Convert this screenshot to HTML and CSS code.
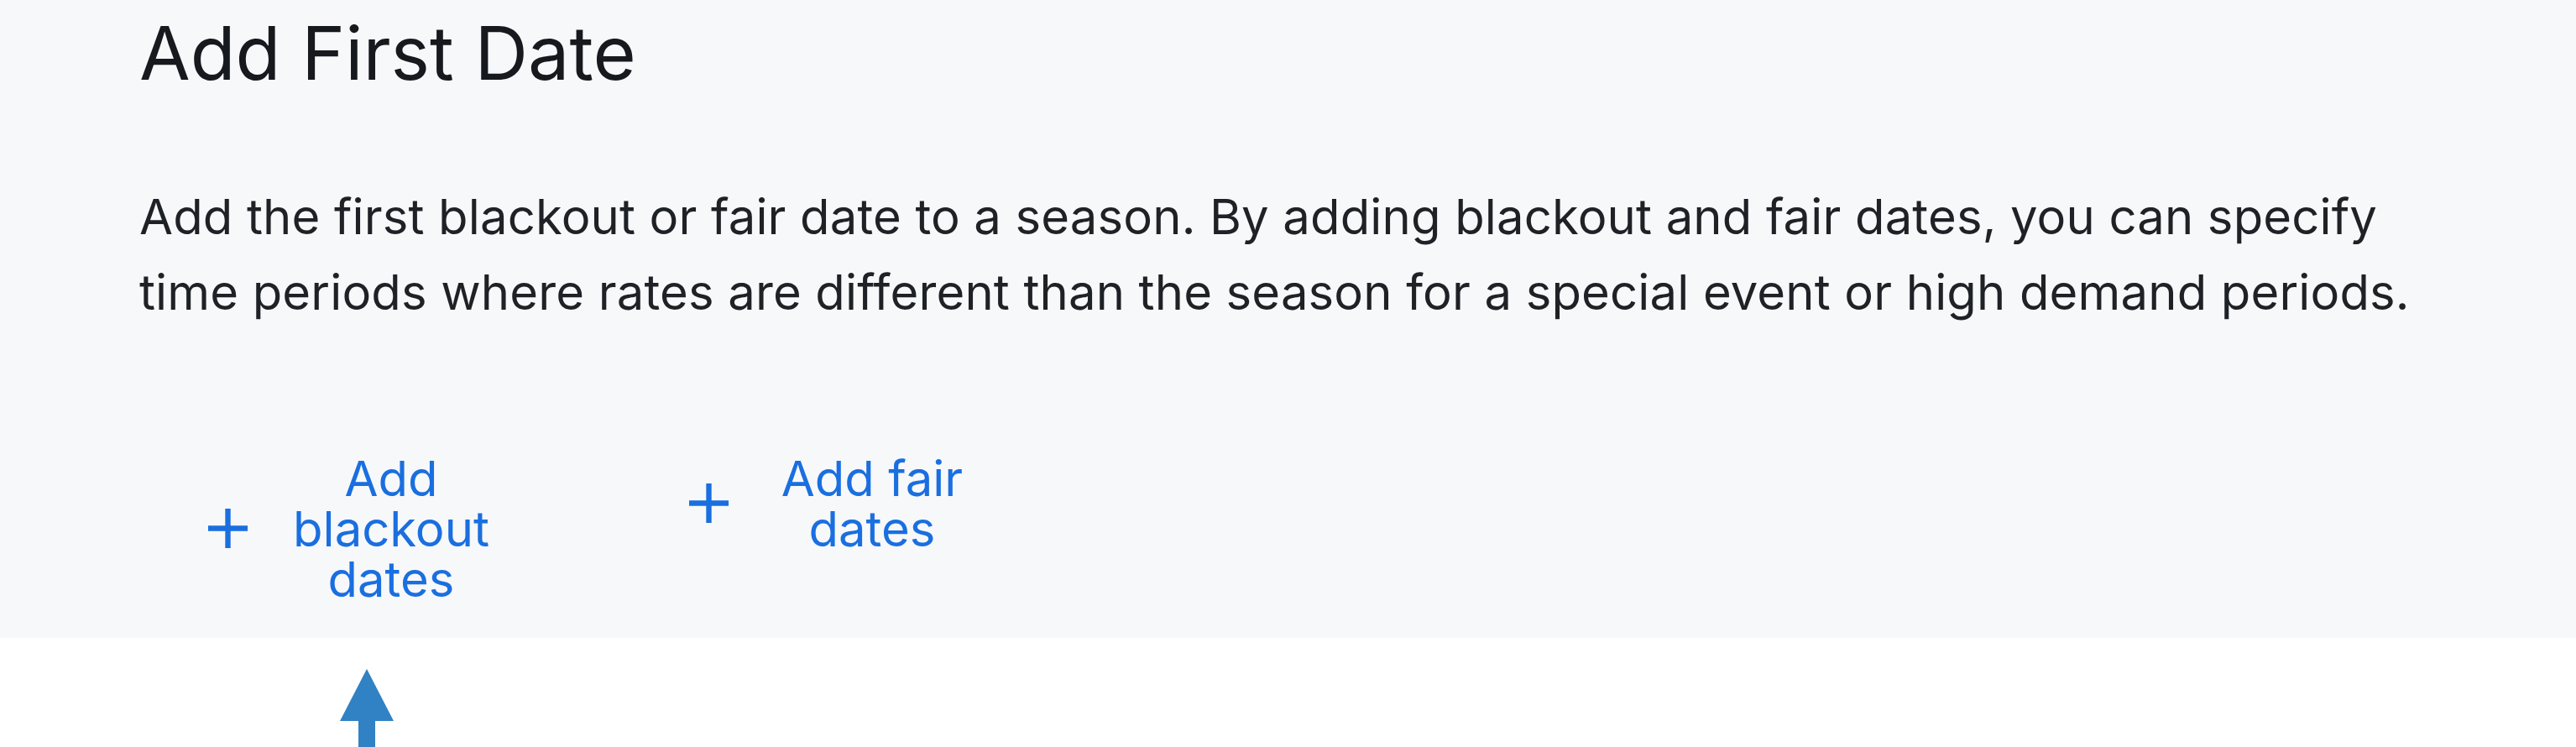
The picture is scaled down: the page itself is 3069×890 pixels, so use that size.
FILE: index.html
```html
<!DOCTYPE html>
<html lang="en">
<head>
    <meta charset="UTF-8">
    <title>Add First Date</title>
    <link rel="stylesheet" href="styles.css">
</head>
<body>
    <section class="panel">
        <h1 class="title">Add First Date</h1>
        <p class="intro">Add the first blackout or fair date to a season. By adding blackout and fair dates, you can specify time periods where rates are different than the season for a special event or high demand periods.</p>
        <div class="actions">
            <button class="add-btn" type="button">
                <svg class="plus" viewBox="0 0 48 48"><path d="M24 0v48M0 24h48"/></svg>
                <span class="label">Add blackout dates</span>
            </button>
            <button class="add-btn" type="button">
                <svg class="plus" viewBox="0 0 48 48"><path d="M24 0v48M0 24h48"/></svg>
                <span class="label">Add fair dates</span>
            </button>
        </div>
    </section>
    <div class="pointer">
        <svg class="arrow" viewBox="0 0 64 93"><path d="M32 0L64 62H42V93H22V62H0Z"/></svg>
    </div>
</body>
</html>
```

FILE: styles.css
```css
body {
    margin: 0;
    background-color: #fff;
    font-family: 'Inter', sans-serif;
}

.panel {
    background-color: #f7f8fa;
    padding: 11px 166px 0;
    height: 760px;
    box-sizing: border-box;
}

.title {
    margin: 0;
    font-size: 88px;
    font-weight: 400;
    color: #16191d;
    line-height: 1.2;
}

.intro {
    margin: 96px 0 0;
    font-size: 58px;
    line-height: 90px;
    letter-spacing: 0.15px;
    color: #1e2226;
}

.actions {
    display: flex;
    align-items: flex-start;
    gap: 225px;
    margin-top: 147px;
    padding-left: 82px;
}

.add-btn {
    display: flex;
    align-items: center;
    gap: 41px;
    padding: 0;
    border: none;
    background: none;
    color: #1a6fe0;
    font-family: inherit;
    font-size: 58px;
    line-height: 60px;
    cursor: pointer;
}

.plus {
    width: 47px;
    height: 47px;
    flex: none;
    stroke: #1a6fe0;
    stroke-width: 6.5;
}

.label {
    width: 260px;
    text-align: center;
}

.pointer {
    padding-left: 405px;
    padding-top: 37px;
}

.arrow {
    display: block;
    width: 64px;
    height: 93px;
    fill: #3182c4;
}
```
